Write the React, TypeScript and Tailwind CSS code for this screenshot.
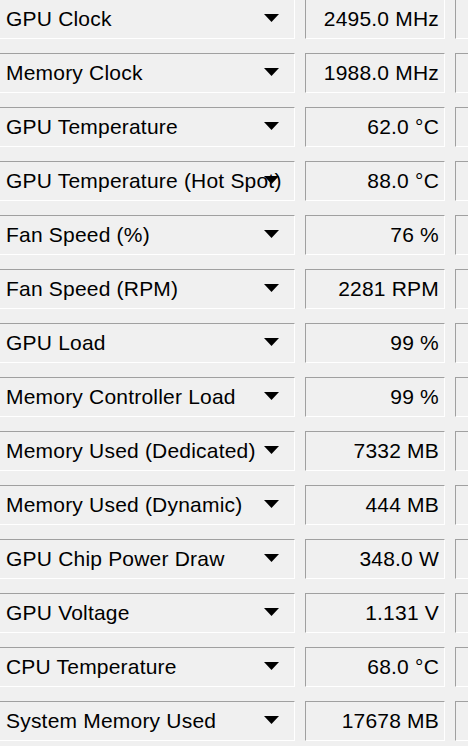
import React from "react";

const rows: [string, string][] = [
  ["GPU Clock", "2495.0 MHz"],
  ["Memory Clock", "1988.0 MHz"],
  ["GPU Temperature", "62.0 °C"],
  ["GPU Temperature (Hot Spot)", "88.0 °C"],
  ["Fan Speed (%)", "76 %"],
  ["Fan Speed (RPM)", "2281 RPM"],
  ["GPU Load", "99 %"],
  ["Memory Controller Load", "99 %"],
  ["Memory Used (Dedicated)", "7332 MB"],
  ["Memory Used (Dynamic)", "444 MB"],
  ["GPU Chip Power Draw", "348.0 W"],
  ["GPU Voltage", "1.131 V"],
  ["CPU Temperature", "68.0 °C"],
  ["System Memory Used", "17678 MB"],
];

export default function App() {
  return (
    <div
      className="w-[468px] h-[746px] overflow-hidden bg-[#f0f0f0] text-black"
      style={{ fontFamily: '"Liberation Sans", Arial, sans-serif' }}
    >
      <div className="flex flex-col gap-[14px] mt-[-1px]">
        {rows.map(([label, value]) => (
          <div key={label} className="flex h-[40px] gap-[10px]">
            <div className="relative ml-[-1px] w-[296px] shrink-0 h-full border-t border-l border-t-[#a0a0a0] border-l-[#a0a0a0] border-b border-r border-b-white border-r-white flex items-center pl-[6px] pb-[2px] text-[21px] leading-none tracking-[0.2px] whitespace-nowrap">
              <span>{label}</span>
              <svg
                className="absolute left-[264px] top-[14px]"
                width="15"
                height="8"
                viewBox="0 0 15 8"
              >
                <polygon points="0,0 15,0 7.5,8" fill="#000" />
              </svg>
            </div>
            <div className="w-[140px] shrink-0 h-full border-t border-l border-t-[#a0a0a0] border-l-[#a0a0a0] border-b border-r border-b-white border-r-white flex items-center justify-end pr-[5px] pb-[2px] text-[21px] leading-none tracking-[0.2px] whitespace-nowrap">
              {value}
            </div>
            <div className="w-[60px] shrink-0 h-full border-t border-l border-t-[#a0a0a0] border-l-[#a0a0a0] border-b border-r border-b-white border-r-white" />
          </div>
        ))}
      </div>
    </div>
  );
}
